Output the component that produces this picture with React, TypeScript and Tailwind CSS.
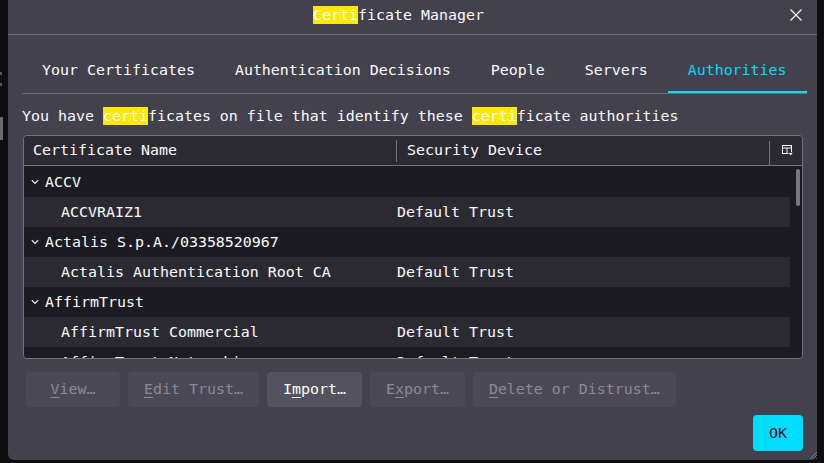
import React from "react";

type Row = { kind: "group" | "cert"; name: string; device?: string };

const rows: Row[] = [
  { kind: "group", name: "ACCV" },
  { kind: "cert", name: "ACCVRAIZ1", device: "Default Trust" },
  { kind: "group", name: "Actalis S.p.A./03358520967" },
  { kind: "cert", name: "Actalis Authentication Root CA", device: "Default Trust" },
  { kind: "group", name: "AffirmTrust" },
  { kind: "cert", name: "AffirmTrust Commercial", device: "Default Trust" },
  { kind: "cert", name: "AffirmTrust Networking", device: "Default Trust" },
  { kind: "cert", name: "AffirmTrust Premium", device: "Default Trust" },
];

const tabs = ["Your Certificates", "Authentication Decisions", "People", "Servers", "Authorities"];

function Hl({ children }: { children: React.ReactNode }) {
  return <span className="bg-[#ffe900] text-white">{children}</span>;
}

function Chevron() {
  return (
    <svg width="8" height="6" viewBox="0 0 8 6" className="shrink-0">
      <path d="M0.8 1.2 L4 4.4 L7.2 1.2" fill="none" stroke="#fbfbfe" strokeWidth="1.1" />
    </svg>
  );
}

// column picker: small table outline with a dropdown triangle
function ColumnPicker() {
  return (
    <svg width="12" height="11" viewBox="0 0 12 11">
      <rect x="0.5" y="0.5" width="9" height="8" fill="none" stroke="#fbfbfe" strokeWidth="1" />
      <path d="M0.5 3 H9.5 M5 3 V8.5" stroke="#fbfbfe" strokeWidth="1" />
      <polygon points="6,7.5 11.5,7.5 8.75,10.8" fill="#fbfbfe" stroke="#2b2a33" strokeWidth="0.8" />
    </svg>
  );
}

function Btn({ children, enabled = false, wide = false }: { children: React.ReactNode; enabled?: boolean; wide?: boolean }) {
  return (
    <div
      className={`flex h-[35px] shrink-0 items-center justify-center whitespace-nowrap rounded-[4px] px-4 ${wide ? "min-w-[94px]" : ""} ${
        enabled ? "bg-[#53525e] text-[#fbfbfe]" : "bg-[#4a4955] text-[#8a8994]"
      }`}
    >
      {children}
    </div>
  );
}

export default function App() {
  return (
    <div
      className="flex h-[463px] w-[824px] overflow-hidden whitespace-nowrap bg-[#0e0e11] text-[14.95px] leading-[17px] text-[#fbfbfe]"
      style={{ fontFamily: '"DejaVu Sans Mono", "Liberation Mono", monospace' }}
    >
      {/* left strip */}
      <div className="flex w-[8px] shrink-0 flex-col">
        <div className="mt-[72px] h-[3px] w-[2px] bg-[#5a5a5e]" />
        <div className="mt-[8px] h-[3px] w-[2px] bg-[#5a5a5e]" />
        <div className="mt-[31px] h-[23px] w-[3px] bg-[#6c6c70]" />
      </div>

      {/* dialog */}
      <div className="relative flex h-[460px] w-[809px] shrink-0 flex-col rounded-b-[6px] bg-[#42414d]">
        {/* title bar */}
        <div className="flex h-[35px] shrink-0 border-b border-[#6b6a75]">
          <div className="flex-1 pt-[7px] text-center">
            <Hl>Certi</Hl>ficate Manager
          </div>
          <div className="flex w-[28px] items-start pl-[1px] pt-[9px]">
            <svg width="12" height="12" viewBox="0 0 12 12">
              <path d="M0.5 0.5 L11.5 11.5 M11.5 0.5 L0.5 11.5" stroke="#fbfbfe" strokeWidth="1.2" />
            </svg>
          </div>
        </div>

        {/* tabs */}
        <div className="ml-[14px] mr-[10px] flex h-[59px] shrink-0 border-b border-[#6b6a75]">
          {tabs.map((t) => (
            <div
              key={t}
              className={`flex h-full shrink-0 items-center border-b-2 px-5 pt-[14px] ${
                t === "Authorities" ? "border-[#00ddff] text-[#00ddff]" : "border-transparent"
              }`}
            >
              {t}
            </div>
          ))}
        </div>

        {/* description */}
        <div className="ml-[14px] mt-[14px] h-[18px]">
          You have <Hl>certi</Hl>ficates on file that identify these <Hl>certi</Hl>ficate authorities
        </div>

        {/* table */}
        <div className="ml-[15px] mt-[9px] flex w-[780px] flex-col overflow-hidden rounded-[4px] border border-[#74737d]">
          <div className="flex h-[30px] shrink-0 items-center border-b border-[#74737d] bg-[#2b2a33]">
            <div className="w-[372px] pl-[9px]">Certificate Name</div>
            <div className="h-[22px] w-px bg-[#74737d]" />
            <div className="flex-1 pl-[10px]">Security Device</div>
            <div className="h-[24px] w-px self-end bg-[#74737d]" />
            <div className="flex w-[32px] items-center pl-[12px]">
              <ColumnPicker />
            </div>
          </div>
          <div className="flex h-[192px] overflow-hidden bg-[#1c1b22] pt-px">
            <div className="flex flex-1 flex-col">
              {rows.map((r, i) => (
                <div key={r.name} className={`flex h-[30px] shrink-0 items-center ${i % 2 === 1 ? "bg-[#2b2a33]" : ""}`}>
                  {r.kind === "group" ? (
                    <div className="flex w-[373px] items-center gap-[6px] pl-[7px]">
                      <Chevron />
                      <span>{r.name}</span>
                    </div>
                  ) : (
                    <div className="w-[373px] pl-[37px]">{r.name}</div>
                  )}
                  <div className="flex-1">{r.device}</div>
                </div>
              ))}
            </div>
            <div className="w-[12px] pl-[6px] pt-[2px]">
              <div className="h-[37px] w-[4px] rounded-full bg-[#77767f]" />
            </div>
          </div>
        </div>

        {/* buttons */}
        <div className="ml-[18px] mt-[13px] flex gap-2">
          <Btn wide>
            <span className="underline underline-offset-[3px]">V</span>iew…
          </Btn>
          <Btn>
            <span className="underline underline-offset-[3px]">E</span>dit Trust…
          </Btn>
          <Btn enabled>
            I<span className="underline underline-offset-[3px]">m</span>port…
          </Btn>
          <Btn>
            E<span className="underline underline-offset-[3px]">x</span>port…
          </Btn>
          <Btn>
            <span className="underline underline-offset-[3px]">D</span>elete or Distrust…
          </Btn>
        </div>

        <div className="mr-[14px] mt-[8px] flex justify-end">
          <div className="flex h-[36px] w-[50px] items-center justify-center rounded-[4px] bg-[#00ddff] text-[#15141a]">
            OK
          </div>
        </div>

        {/* resize grip */}
        <svg width="9" height="9" viewBox="0 0 9 9" className="absolute bottom-[1px] right-0">
          <path d="M9 2 L2 9 M9 5 L5 9 M9 8 L8 9" stroke="#8a8994" strokeWidth="0.8" />
        </svg>
      </div>

      <div className="flex-1" />
    </div>
  );
}
